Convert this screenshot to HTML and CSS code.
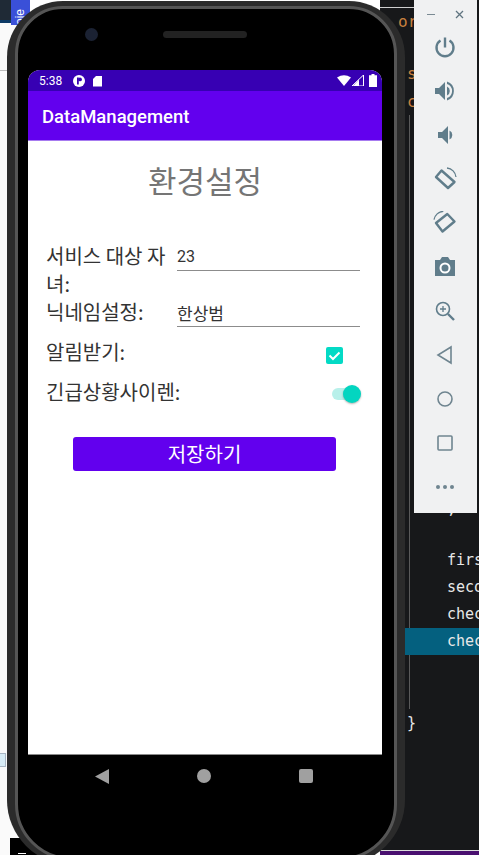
FILE: index.html
```html
<!DOCTYPE html>
<html lang="en">
<head>
    <meta charset="UTF-8">
    <title>DataManagement</title>
    <link rel="stylesheet" href="styles.css">
</head>
<body>
    <div class="desktop">
        <!-- 왼쪽 IDE 조각 -->
        <div class="leftPane">
            <div class="leftDark"></div>
            <div class="projectTab">oje</div>
            <div class="leftLine"></div>
            <div class="leftBox"></div>
            <div class="leftCorner"><span class="cornerMark"></span></div>
        </div>

        <!-- 오른쪽 코드 에디터 -->
        <div class="codePane">
            <div class="topLine"></div>
            <div class="guide"></div>
            <span class="orange orTop">or</span>
            <span class="orange orS">s</span>
            <span class="orange orC">c</span>
            <span class="codeLine l0">;</span>
            <span class="codeLine l1">firs</span>
            <span class="codeLine l2">seco</span>
            <span class="codeLine l3">chec</span>
            <span class="selLine"></span>
            <span class="codeLine l4">chec</span>
            <span class="codeLine l5">}</span>
            <div class="bottomBar"></div>
        </div>

        <!-- 에뮬레이터 폰 -->
        <div class="phone">
            <div class="phoneInner">
                <div class="camera"></div>
                <div class="speaker"></div>
                <div class="screen">
                    <div class="statusBar">
                        <span class="clock">5:38</span>
                        <svg class="sIcon" width="14" height="14" viewBox="0 0 14 14"><circle cx="7" cy="7" r="6" fill="#fff"/><path d="M5 3.500h1.800v7H5z" fill="#3700b3"/><circle cx="8" cy="5.400" r="1.900" fill="#3700b3"/></svg>
                        <svg class="sIcon" width="11" height="12" viewBox="0 0 11 12"><path d="M4 1h6v10.500H1V4z" fill="#fff"/></svg>
                        <span class="spacer"></span>
                        <svg width="14" height="11" viewBox="0 0 14 11"><path d="M0 2.500Q7-2 14 2.500L7 11z" fill="#fff"/></svg>
                        <svg class="signal" width="12" height="11" viewBox="0 0 12 11"><path d="M11.500 0v11H0z" fill="none" stroke="#fff" stroke-width="1"/><path d="M7 4.500V11H1z" fill="#fff"/></svg>
                        <svg class="battery" width="8" height="13" viewBox="0 0 8 13"><path d="M2.500 0h3v1.200H8V13H0V1.200h2.500z" fill="#fff"/></svg>
                    </div>
                    <div class="appBar">DataManagement</div>
                    <div class="content">
                        <h1 class="title">환경설정</h1>
                        <div class="formRow first">
                            <label class="rowLabel">서비스 대상 자녀:</label>
                            <div class="field latin">23</div>
                        </div>
                        <div class="formRow second">
                            <label class="rowLabel">닉네임설정:</label>
                            <div class="field">한상범</div>
                        </div>
                        <div class="toggleRow third">
                            <label class="rowLabel">알림받기:</label>
                            <svg class="check" width="17" height="17" viewBox="0 0 17 17"><rect width="17" height="17" rx="2" fill="#03dac5"/><path d="M3.500 8.500l3.500 3.500 6.500-6.500" fill="none" stroke="#fff" stroke-width="2"/></svg>
                        </div>
                        <div class="toggleRow fourth">
                            <label class="rowLabel">긴급상황사이렌:</label>
                            <div class="switch"><div class="knob"></div></div>
                        </div>
                        <button class="saveBtn">저장하기</button>
                    </div>
                </div>
                <div class="navBar">
                    <svg width="14" height="15" viewBox="0 0 14 15"><path d="M14 0v15L0 7.500z" fill="#a0a0a0"/></svg>
                    <svg width="14" height="14" viewBox="0 0 14 14"><circle cx="7" cy="7" r="7" fill="#a0a0a0"/></svg>
                    <svg width="14" height="14" viewBox="0 0 14 14"><rect width="14" height="14" rx="2" fill="#a0a0a0"/></svg>
                </div>
            </div>
        </div>

        <!-- 에뮬레이터 사이드 툴바 -->
        <div class="toolbar">
            <div class="winBtns">
                <span class="winMin"></span>
                <svg width="9" height="9" viewBox="0 0 9 9"><path d="M1 1l7 7M8 1l-7 7" stroke="#5f7480" stroke-width="1.300"/></svg>
            </div>
            <svg class="tool" viewBox="0 0 24 24"><path d="M12 2.500v10" stroke="#607d8b" stroke-width="2.400" fill="none"/><path d="M7.500 5.500a8.500 8.500 0 1 0 9 0" stroke="#607d8b" stroke-width="2.400" fill="none"/></svg>
            <svg class="tool" viewBox="0 0 24 24"><path d="M2 9v6h4l6 6V3L6 9z" fill="#607d8b"/><path d="M14 7.500a5 5 0 0 1 0 9z" fill="#607d8b"/><path d="M14 2.500a10 10 0 0 1 0 19v-2.400a7.500 7.500 0 0 0 0-14.200z" fill="#607d8b"/></svg>
            <svg class="tool" viewBox="0 0 24 24"><path d="M5 9v6h4l6 6V3L9 9z" fill="#607d8b"/><path d="M16.500 7.500a5 5 0 0 1 0 9z" fill="#607d8b"/></svg>
            <svg class="tool" viewBox="0 0 24 24"><path d="M3 10L8.500 3.500 21.500 15 15 21z" fill="none" stroke="#607d8b" stroke-width="2.400" stroke-linejoin="round"/><path d="M14 1a10 10 0 0 1 9 9" fill="none" stroke="#607d8b" stroke-width="1.300"/></svg>
            <svg class="tool" viewBox="0 0 24 24"><path d="M3 12L14.300 3 21.500 10.500 9.500 20.500z" fill="none" stroke="#607d8b" stroke-width="2.400" stroke-linejoin="round"/><path d="M1 8.700A10 10 0 0 1 10.300 .3" fill="none" stroke="#607d8b" stroke-width="1.300"/></svg>
            <svg class="tool" viewBox="0 0 24 24"><path d="M2 5h5l2-3h6l2 3h5v16H2z" fill="#607d8b"/><circle cx="12" cy="13" r="4.500" fill="none" stroke="#fff" stroke-width="2"/></svg>
            <svg class="tool" viewBox="0 0 24 24"><circle cx="10" cy="10" r="6.500" fill="none" stroke="#607d8b" stroke-width="1.600"/><path d="M15 15l6 6" stroke="#607d8b" stroke-width="2.400"/><path d="M7 10h6M10 7v6" stroke="#607d8b" stroke-width="1.300"/></svg>
            <svg class="tool" viewBox="0 0 24 24"><path d="M18 4v16L5 12z" fill="none" stroke="#6f8590" stroke-width="1.600"/></svg>
            <svg class="tool" viewBox="0 0 24 24"><circle cx="12" cy="12" r="7" fill="none" stroke="#6f8590" stroke-width="1.600"/></svg>
            <svg class="tool" viewBox="0 0 24 24"><rect x="5" y="5" width="14" height="14" rx="1" fill="none" stroke="#6f8590" stroke-width="1.600"/></svg>
            <svg class="tool" viewBox="0 0 24 24"><circle cx="5" cy="12" r="2" fill="#6f8590"/><circle cx="12" cy="12" r="2" fill="#6f8590"/><circle cx="19" cy="12" r="2" fill="#6f8590"/></svg>
        </div>
    </div>
</body>
</html>
```

FILE: styles.css
```css
html, body {
    margin: 0;
    padding: 0;
}

body {
    font-family: "Noto Sans CJK KR", "Noto Sans", sans-serif;
    background-color: #fff;
}

.desktop {
    position: relative;
    width: 479px;
    height: 855px;
    overflow: hidden;
}

/* 왼쪽 IDE */
.leftPane {
    position: absolute;
    left: 0;
    top: 0;
    width: 30px;
    height: 855px;
    background-color: #fafafa;
}
.leftDark {
    height: 20px;
    width: 11px;
    background-color: #1f2a36;
    border-bottom: 3px solid #0d3a66;
}
.projectTab {
    position: absolute;
    left: 11px;
    top: 0;
    width: 19px;
    height: 25px;
    background-color: #3a50d8;
    color: #fff;
    font: 12px "Liberation Sans", sans-serif;
    writing-mode: vertical-rl;
    transform: rotate(180deg);
    line-height: 19px;
}
.leftLine {
    position: absolute;
    left: 0;
    top: 70px;
    width: 30px;
    height: 1px;
    background-color: #bbb;
}
.leftBox {
    position: absolute;
    left: 0;
    top: 753px;
    width: 5px;
    height: 12px;
    border: 1px solid #a9b6c4;
    border-left: none;
    background-color: #d8ecf6;
}
.leftCorner {
    position: absolute;
    left: 10px;
    top: 838px;
    width: 40px;
    height: 17px;
    background-color: #000;
}
.cornerMark {
    position: absolute;
    left: 8px;
    top: 12px;
    width: 8px;
    height: 3px;
    border-bottom: 1px solid #fff;
}

/* 코드 에디터 */
.codePane {
    position: absolute;
    left: 380px;
    top: 0;
    width: 99px;
    height: 855px;
    background-color: #17181a;
    font-family: "DejaVu Sans Mono", monospace;
    font-size: 15px;
    color: #e8e8e8;
}
.topLine {
    position: absolute;
    left: 0;
    top: 7px;
    width: 40px;
    height: 1px;
    background-color: #cfcfcf;
}
.guide {
    position: absolute;
    left: 29px;
    top: 115px;
    width: 1px;
    height: 594px;
    background-color: #5a5a5a;
}
.orange {
    position: absolute;
    color: #c7803f;
    font-size: 16px;
}
.orTop { top: 12px; left: 18px; }
.orS { top: 64px; left: 27px; }
.orC { top: 92px; left: 27px; }
.codeLine {
    position: absolute;
    left: 67px;
    white-space: nowrap;
}
.l0 { top: 500px; }
.l1 { top: 551px; }
.l2 { top: 578px; }
.l3 { top: 605px; }
.l4 { top: 632px; }
.l5 { top: 714px; left: 27px; }
.selLine {
    position: absolute;
    left: 25px;
    top: 628px;
    width: 74px;
    height: 27px;
    background-color: #04607f;
}
.bottomBar {
    position: absolute;
    left: 0;
    bottom: 0;
    width: 99px;
    height: 4px;
    background-color: #4a1070;
    border-top: 1px solid #ddd;
}

/* 폰 */
.phone {
    position: absolute;
    left: 7px;
    top: 1px;
    width: 398px;
    height: 864px;
    box-sizing: border-box;
    background-color: #2b2b2b;
    border-radius: 56px 56px 65px 65px;
    padding: 5px 8px;
}
.phoneInner {
    position: relative;
    height: 100%;
    box-sizing: border-box;
    background-color: #000;
    border: 3px solid #555;
    border-radius: 48px 48px 56px 56px;
    padding: 61px 12px 0 10px;
    display: flex;
    flex-direction: column;
}
.camera {
    position: absolute;
    left: 67px;
    top: 19px;
    width: 13px;
    height: 13px;
    border-radius: 50%;
    background-color: #1b2233;
}
.speaker {
    position: absolute;
    left: 145px;
    top: 22px;
    width: 84px;
    height: 7px;
    border-radius: 4px;
    background-color: #222;
}
.screen {
    height: 684px;
    background-color: #fff;
    border-radius: 12px 12px 0 0;
    overflow: hidden;
    display: flex;
    flex-direction: column;
}
.statusBar {
    height: 21px;
    background-color: #3700b3;
    color: #fff;
    display: flex;
    align-items: center;
    gap: 3px;
    padding: 0 5px 0 11px;
    font-family: Roboto, sans-serif;
    font-size: 12px;
}
.clock {
    margin-right: 7px;
}
.sIcon {
    margin-right: 3px;
}
.spacer {
    flex: 1;
}
.signal {
    margin-left: -2px;
    margin-right: 2px;
}
.appBar {
    height: 50px;
    box-sizing: border-box;
    background-color: #6200ee;
    color: #fff;
    font-family: Roboto, sans-serif;
    font-weight: 500;
    font-size: 18.500px;
    line-height: 52px;
    padding-left: 14px;
    border-bottom: 1px solid #a77bf0;
}
.content {
    flex: 1;
    padding: 0 22px 0 18px;
    color: #333;
}
.title {
    margin: 20px -4px 0 0;
    text-align: center;
    font-size: 31px;
    font-weight: 400;
    line-height: 38px;
    color: #757575;
}
.formRow {
    display: flex;
}
.first {
    margin-top: 43px;
}
.rowLabel {
    width: 131px;
    font-size: 20px;
    line-height: 28px;
    flex-shrink: 0;
}
.toggleRow .rowLabel {
    width: 200px;
}
.field {
    flex: 1;
    height: 28px;
    border-bottom: 1px solid #8c8c8c;
    font-size: 17px;
    line-height: 30px;
    color: #333;
}
.latin {
    font-family: Roboto, sans-serif;
    font-size: 16px;
}
.toggleRow {
    display: flex;
    justify-content: space-between;
    align-items: flex-start;
    margin-top: 11px;
}
.check {
    margin: 9px 17px 0 0;
}
.fourth {
    margin-top: 12px;
}
.switch {
    position: relative;
    width: 28px;
    height: 12px;
    margin: 10px 0 0 0;
    border-radius: 6px;
    background-color: #b8f0ea;
}
.knob {
    position: absolute;
    right: -1px;
    top: -3px;
    width: 18px;
    height: 18px;
    border-radius: 50%;
    background-color: #03d5c0;
    box-shadow: 0 1px 2px rgba(0, 0, 0, 0.3);
}
.saveBtn {
    display: block;
    width: 263px;
    height: 34px;
    margin: 31px 0 0 27px;
    border: none;
    border-radius: 3px;
    background-color: #6200ee;
    color: #fff;
    font-family: inherit;
    font-size: 20px;
    line-height: 34px;
    padding: 0;
}
.navBar {
    display: flex;
    justify-content: space-between;
    align-items: center;
    height: 42px;
    border-top: 1px solid #8a8a8a;
    padding: 0 69px 0 67px;
}

/* 사이드 툴바 */
.toolbar {
    position: absolute;
    left: 414px;
    top: 0;
    width: 62px;
    padding-right: 1px;
    height: 513px;
    background-color: #f0f1f2;
    display: flex;
    flex-direction: column;
    align-items: center;
}
.winBtns {
    display: flex;
    align-items: center;
    gap: 20px;
    height: 20px;
    margin-top: 4px;
}
.winMin {
    display: block;
    width: 8px;
    height: 1px;
    background-color: #7a8a93;
}
.tool {
    width: 24px;
    height: 24px;
    margin-top: 11px;
    margin-bottom: 9px;
}
```
